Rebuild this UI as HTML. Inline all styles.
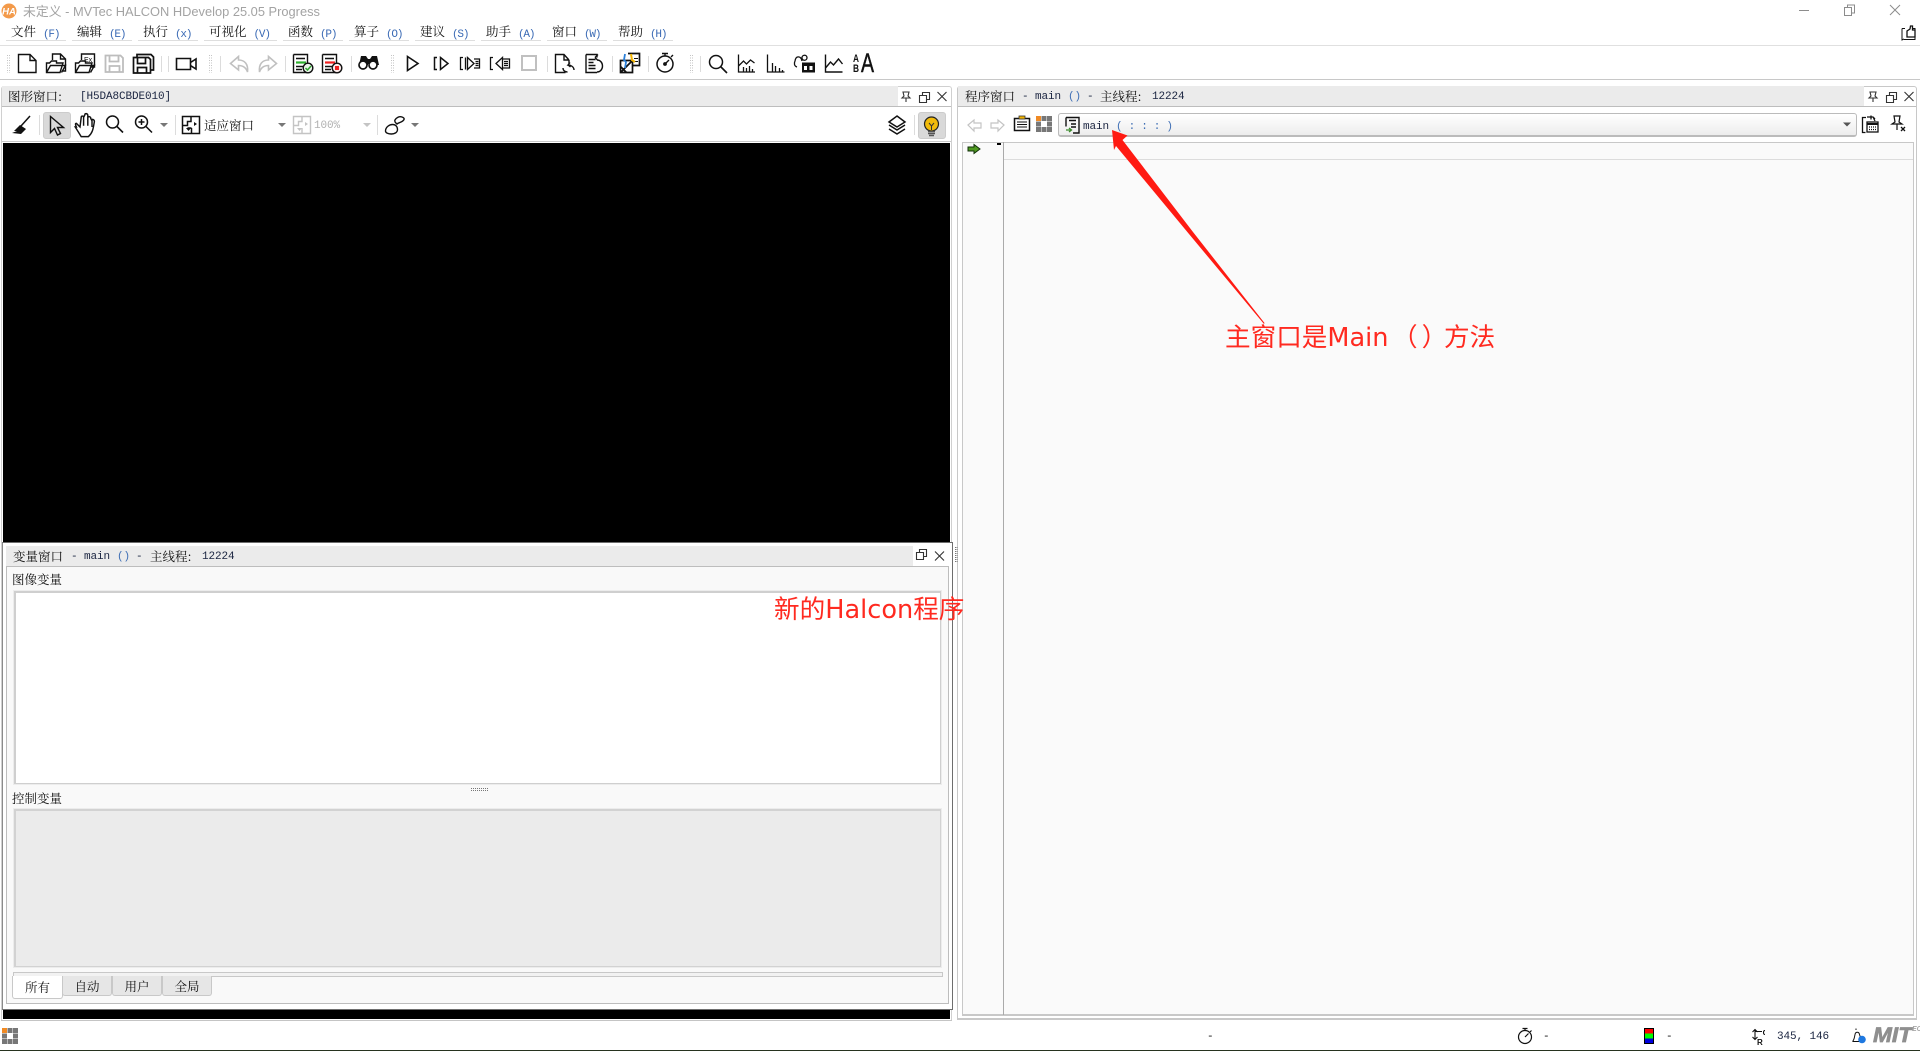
<!DOCTYPE html>
<html lang="zh"><head><meta charset="utf-8"><title>HALCON HDevelop</title>
<style>
html,body{margin:0;padding:0;background:#fff;width:1920px;height:1051px;overflow:hidden}
body{position:relative;font:12.5px/14px "Noto Serif CJK SC","Liberation Serif",serif;color:#111}
.a{position:absolute}
.t{position:absolute;white-space:pre;line-height:14px;font-size:12.5px}
.m{font-family:"Liberation Mono",monospace;font-size:11px;letter-spacing:-.1px;color:#1a2440}
.b{color:#3f6fb5}
.menu{position:absolute;top:24px;height:16px;border-bottom:1px solid #dedede;white-space:pre;line-height:15px;font-size:12.5px;padding-left:5px}
.menu .m{color:#3a6ab5;margin-left:7px;display:inline-block;letter-spacing:-1.2px;position:relative;top:1px}
.tab{position:absolute;top:976px;height:20px;box-sizing:border-box;border:1px solid #c8c8c8;border-top:0;background:#e6e6e6;border-radius:0 0 3px 3px;text-align:center;line-height:20px;font-size:12.5px}
.red{position:absolute;color:#ff2a20;font:25.6px/30px "Noto Sans CJK SC","DejaVu Sans",sans-serif;white-space:pre}
.red span{font-family:"DejaVu Sans",sans-serif}
svg{position:absolute;left:0;top:0}
</style></head><body>
<!-- title bar -->
<div class="t" style="left:23px;top:4px;color:#a3a3a3;font:12.85px/16px 'Liberation Sans','Noto Sans CJK SC',sans-serif">未定义 - MVTec HALCON HDevelop 25.05 Progress</div>
<!-- menu -->
<div class="menu" style="left:6px;width:55px">文件<span class="m">(F)</span></div>
<div class="menu" style="left:72px;width:55px">编辑<span class="m">(E)</span></div>
<div class="menu" style="left:138px;width:55px">执行<span class="m">(x)</span></div>
<div class="menu" style="left:204px;width:68px">可视化<span class="m">(V)</span></div>
<div class="menu" style="left:283px;width:55px">函数<span class="m">(P)</span></div>
<div class="menu" style="left:349px;width:55px">算子<span class="m">(O)</span></div>
<div class="menu" style="left:415px;width:55px">建议<span class="m">(S)</span></div>
<div class="menu" style="left:481px;width:55px">助手<span class="m">(A)</span></div>
<div class="menu" style="left:547px;width:55px">窗口<span class="m">(W)</span></div>
<div class="menu" style="left:613px;width:55px">帮助<span class="m">(H)</span></div>
<div class="a" style="left:0;top:45px;width:1920px;height:1px;background:#e0e0e0"></div>
<div class="a" style="left:0;top:79px;width:1920px;height:1px;background:#c8c8c8"></div>

<!-- left graphics panel -->
<div class="a" style="left:1px;top:86px;width:951px;height:934px;border:1px solid #d0d0d0;border-bottom:0;border-radius:3px 3px 0 0;box-sizing:border-box"></div>
<div class="a" style="left:2px;top:86px;width:896px;height:20px;background:#ebebeb"></div>
<div class="a" style="left:2px;top:106px;width:949px;height:1px;background:#bdbdbd"></div>
<div class="a" style="left:2px;top:141px;width:949px;height:1px;background:#c8c8c8"></div>
<div class="t" style="left:8px;top:89px">图形窗口:</div>
<div class="t m" style="left:80px;top:90px">[H5DA8CBDE010]</div>
<div class="a" style="left:3px;top:143px;width:947px;height:399px;background:#000"></div>
<div class="a" style="left:3px;top:1010px;width:947px;height:9px;background:#000"></div>
<div class="a" style="left:1px;top:1020px;width:951px;height:1px;background:#c4c4c4"></div>
<div class="a" style="left:43px;top:112px;width:28px;height:27px;background:#d9d9d9;border:1px solid #ccc;box-sizing:border-box;border-radius:3px"></div>
<div class="a" style="left:918px;top:112px;width:28px;height:27px;background:#d9d9d9;border:1px solid #ccc;box-sizing:border-box;border-radius:3px"></div>
<div class="t" style="left:204px;top:118px">适应窗口</div>
<div class="t" style="left:314px;top:119px;color:#b0b0b0;font-family:'Liberation Mono',monospace;font-size:11px;letter-spacing:-.1px">100%</div>

<!-- variables panel -->
<div class="a" style="left:2px;top:542px;width:951px;height:468px;background:#fff;border:1px solid #6e6e6e;border-left-color:#8a8a8a;box-sizing:border-box"></div>
<div class="a" style="left:6px;top:546px;width:907px;height:20px;background:#ebebeb"></div>
<div class="a" style="left:6px;top:566px;width:943px;height:438px;background:#f9f9f9;border:1px solid #bdbdbd;box-sizing:border-box"></div>
<div class="t" style="left:13px;top:549px">变量窗口</div>
<div class="t m" style="left:71px;top:550px">-</div>
<div class="t m" style="left:84px;top:550px">main</div>
<div class="t m b" style="left:117px;top:550px">()</div>
<div class="t m" style="left:136px;top:550px">-</div>
<div class="t" style="left:150px;top:549px">主线程:</div>
<div class="t m" style="left:202px;top:550px">12224</div>
<div class="t" style="left:12px;top:572px;font-size:12.5px">图像变量</div>
<div class="a" style="left:14px;top:591px;width:927px;height:193px;background:#fff;border:2px solid #cfcfcf;border-right-width:1px;border-bottom-width:1px;outline:1px solid #ececec;box-sizing:border-box"></div>
<div class="t" style="left:12px;top:791px;font-size:12.5px">控制变量</div>
<div class="a" style="left:14px;top:809px;width:927px;height:158px;background:#ebebeb;border:2px solid #d2d2d2;border-right-width:1px;border-bottom-width:1px;outline:1px solid #ececec;box-sizing:border-box"></div>
<div class="a" style="left:13px;top:972px;width:930px;height:5px;background:#f2f2f2;border:1px solid #c8c8c8;box-sizing:border-box"></div>
<div class="tab" style="left:62px;width:50px">自动</div>
<div class="tab" style="left:112px;width:50px">用户</div>
<div class="tab" style="left:162px;width:50px">全局</div>
<div class="tab" style="left:12px;top:976px;width:51px;height:23px;background:#fff;line-height:23px">所有</div>

<!-- program panel -->
<div class="a" style="left:957px;top:86px;width:960px;height:934px;border:1px solid #c8c8c8;border-width:1px 1px 2px 1px;border-radius:3px 3px 0 0;box-sizing:border-box"></div>
<div class="a" style="left:958px;top:86px;width:906px;height:20px;background:#ebebeb"></div>
<div class="a" style="left:958px;top:106px;width:958px;height:1px;background:#bdbdbd"></div>
<div class="t" style="left:965px;top:89px">程序窗口</div>
<div class="t m" style="left:1022px;top:90px">-</div>
<div class="t m" style="left:1035px;top:90px">main</div>
<div class="t m b" style="left:1068px;top:90px">()</div>
<div class="t m" style="left:1087px;top:90px">-</div>
<div class="t" style="left:1100px;top:89px">主线程:</div>
<div class="t m" style="left:1152px;top:90px">12224</div>
<div class="a" style="left:1058px;top:113px;width:799px;height:24px;border:1px solid #bbb;border-bottom-width:2px;border-radius:3px;background:linear-gradient(#fff,#ededed);box-sizing:border-box"></div>
<div class="t m" style="left:1083px;top:120px">main</div>
<div class="t m b" style="left:1116px;top:120px;letter-spacing:-.3px">( : : : )</div>
<div class="a" style="left:962px;top:142px;width:952px;height:874px;background:#fafafa;border:1px solid #c8c8c8;border-width:1px 1px 2px 1px;box-sizing:border-box"></div>
<div class="a" style="left:1003px;top:142px;width:1px;height:873px;background:#aaa"></div>
<div class="a" style="left:1004px;top:159px;width:909px;height:1px;background:#dcdcdc"></div>
<div class="a" style="left:997px;top:143px;width:4px;height:2px;background:#000"></div>

<!-- status -->
<div class="a" style="left:0;top:1050px;width:1920px;height:1px;background:#27331f"></div>
<div class="t m" style="left:1207px;top:1030px;color:#111">-</div>
<div class="t m" style="left:1543px;top:1030px;color:#111">-</div>
<div class="t m" style="left:1666px;top:1030px;color:#111">-</div>
<div class="t m" style="left:1777px;top:1030px">345, 146</div>
<div class="a" style="left:1873px;top:1025px;font:italic 700 21px/21px 'Liberation Sans',sans-serif;color:#8f8f8f;-webkit-text-stroke:.7px #8f8f8f;white-space:pre;transform-origin:0 0;transform:scaleX(1.08)">MIT</div>
<div class="a" style="left:1912px;top:1026px;font:italic 700 7px/8px 'Liberation Sans',sans-serif;color:#a8a8a8">EC</div>

<!-- annotations -->
<div class="red" style="left:774px;top:593px">新的<span>Halcon</span>程序</div>
<div class="red" style="left:1225px;top:321px">主窗口是<span>Main</span></div>
<div class="red" style="left:1392px;top:321px"><span style="font-family:'Noto Sans CJK SC',sans-serif;letter-spacing:4px">（</span><span style="font-family:'Noto Sans CJK SC',sans-serif">）</span></div>
<div class="red" style="left:1444px;top:321px">方法</div>

<svg width="1920" height="1051" viewBox="0 0 1920 1051" fill="none" stroke="#111" stroke-width="1.4">
<!-- app icon -->
<circle cx="9" cy="11" r="7.500" fill="#f39a4a" stroke="none"/>
<text x="9" y="14.500" font-family="Liberation Sans" font-size="9.500" font-weight="700" font-style="italic" fill="#fff" stroke="none" text-anchor="middle">HA</text>
<!-- window buttons -->
<g stroke="#8c8c8c" stroke-width="1">
<path d="M1799 10.500h10"/><path d="M1844.500 7.500h7v8h-7zM1847.500 7.500v-2.500h7v8h-3"/><path d="M1890 5l10 10M1900 5l-10 10"/>
</g>
<!-- thumbs -->
<path d="M1902 28.500v11.500l2-1M1902 28.500h3M1904 39.500h11v-11h-3" stroke-width="1"/><path d="M1907 37v-6l3-2 .5-3h2v4h2.500v7z" stroke-width="1.300"/>
<!-- grippers -->
<g stroke="#c4c4c4" stroke-width="1" stroke-dasharray="1 1.500">
<path d="M7.500 55v18M9.500 55v18M209.500 55v18M211.500 55v18M391.500 55v18M393.500 55v18M690.500 55v18M692.500 55v18"/>
</g>
<!-- seps -->
<g stroke="#dcdcdc" stroke-width="1">
<path d="M161.500 56v16M168.500 56v16M285.500 56v16M220.500 56v16M351.500 56v16M547.500 56v16M612.500 56v16M648.500 56v16M700.500 56v16M39.500 115v20M175.500 115v20M377.500 115v20M914.500 115v20"/>
</g>
<!-- new -->
<path d="M18.500 54.500h11.500l6 6v12h-17.500zM30 54.500v6h6"/>
<!-- open -->
<path d="M52.500 60v-6h8l5 5v12h-3M60.500 54v5h5M46.500 72.500v-9.500h3l2-2h5v2h6.500l-3 9.500zM46.500 72.500l4-7h15l-4 7"/>
<!-- open Ex -->
<path d="M81.500 60v-6h13v13h-4M75.500 72.500v-9.500h3l2-2h5v2h6.500l-3 9.500zM75.500 72.500l4-7h15l-4 7"/>
<text x="84" y="62" font-family="Liberation Sans" font-size="7" fill="#111" stroke="none">Ex</text>
<!-- save gray -->
<path d="M105.500 55.500h15l2.500 2.500v14h-17.500zM109.500 55.500v6h9v-6M109.500 72v-6h10v6" stroke="#bdbdbd" stroke-width="1.800"/>
<!-- save all -->
<path d="M133.500 57.500h15l2 2v13.500h-17zM137.500 57.500v6h8v-6M137.500 73v-5.500h9v5.500M137 57v-2.500h14l2.500 2.500v13h-3" stroke-width="1.700"/>
<!-- camera -->
<path d="M176.500 58.500h14v11h-14zM190.500 62.500l5.500-3.500v10l-5.500-3.500z" stroke-width="1.600"/>
<!-- undo/redo -->
<g stroke="#c0c0c0" stroke-width="1.600">
<path d="M238.500 56.500l-8 7 8 6.500v-4.500c4 0 7.500 2 9 6.500 1-8-3-12-9-12z"/>
<path d="M268.500 56.500l8 7-8 6.500v-4.500c-4 0-7.500 2-9 6.500-1-8 3-12 9-12z"/>
</g>
<!-- list green -->
<path d="M293.500 54.500h14v11M307.500 72.500h-14v-18M296 58.500h9M296 66.500h7M296 69.500h6"/>
<path d="M296 62.500h10" stroke="#2fb02f" stroke-width="2.200"/>
<circle cx="308" cy="68" r="4.800" fill="#eaf5ea"/><path d="M305.500 68l2 2 3.500-4" stroke="#2fa52f" stroke-width="1.500"/>
<!-- list red -->
<path d="M322.500 54.500h14v11M336.500 72.500h-14v-18M325 58.500h9M325 66.500h7M325 69.500h6"/>
<path d="M325 62.500h10" stroke="#ee2020" stroke-width="2.200"/>
<circle cx="337" cy="68" r="4.800" fill="#fdeaea"/><rect x="335" y="66" width="4" height="4" fill="#ee2020" stroke="none"/>
<!-- binoculars -->
<path d="M361 56h5l2 3h2l2-3h5l2 9h-9v-1h-2v1h-9z" fill="#111" stroke="none"/>
<circle cx="363" cy="65" r="4" fill="#fff" stroke-width="1.700"/><circle cx="373" cy="65" r="4" fill="#fff" stroke-width="1.700"/>
<!-- play -->
<path d="M407.500 56.500l10.500 7-10.500 7z" stroke-width="1.600"/>
<path d="M437 57.500h-2.500v12h2.500M440.500 57.500l7.500 6-7.500 6z" stroke-width="1.500"/>
<path d="M463 57.500h-2.500v12h2.500M465.500 57.500v12M467.500 57.500l6.500 6-6.500 6zM474 59h5.500v9h-5.500M475.500 61.500h3M475.500 63.500h3M475.500 65.500h3" stroke-width="1.300"/>
<path d="M493 57.500h-2.500v12h2.500M502.500 57.500l-6.500 6 6.500 6zM502.500 59h7v9h-7M504 61.500h4M504 63.500h4M504 65.500h4" stroke-width="1.300"/>
<rect x="522" y="56" width="14" height="14" stroke="#c0c0c0" stroke-width="2"/>
<!-- docs -->
<path d="M569 60l-5-5.500h-8.500v18h10M564 54.500v5.500h5M569 60v4M574 70c0-3-3-5-6-5l2-2.500M568 65l2.500 2M563 68c0 2.500 2 4 4.500 4" stroke-width="1.400"/>
<path d="M586 54.500h11v3M586 54.500v18h11M588.500 59.500h7M588.500 62.500h5M588.500 65.500h7M588.500 68.500h7M597 60c3.500 0 5.500 3 5.500 6s-2 6-5.500 6M595 57.500l3-3M595 57.500l3 3" stroke-width="1.400"/>
<!-- color doc -->
<path d="M620.500 60.500h12v12h-12zM620.500 72.500l12-12M620.500 66.500l6 6" stroke-width="1.700"/>
<path d="M628 53.500h11.500v12h-7" stroke-width="1.700"/>
<path d="M634 58.500h4M634 61.500h4" stroke-width="1"/>
<path d="M625 54l-1 6 2 2-1 6" stroke="#2a7fd8" stroke-width="1.800"/><path d="M631 54l1 6 3 2" stroke="#f2b400" stroke-width="2"/>
<!-- stopwatch -->
<circle cx="665" cy="64" r="8" stroke-width="1.500"/><path d="M662 53.500h6M665 53.500v2.500M671 57l2-2M665 64l4-4" stroke-width="1.400"/><circle cx="665" cy="64" r="1.200" fill="#111"/>
<!-- search -->
<circle cx="716" cy="62" r="6.500" stroke-width="1.500"/><path d="M721 67l6 6" stroke-width="1.600"/>
<!-- charts -->
<path d="M738.500 54.500v17.500h16.500M738.500 66l5-5 3 3 4-4 4 3M743.500 72v-5M746.500 72v-4M749.500 72v-6M752.500 72v-3" stroke-width="1.300"/>
<path d="M767.500 54.500v17.500h17M772.500 72v-9M775.500 72v-6M779.500 72v-4M782.500 72v-2" stroke-width="1.300"/>
<path d="M802 61c-1-5-6-6-7 0-1 2-1 5 2 6M802 58a2.500 2.500 0 1 0 5-.5 2.500 2.500 0 0 0-5 .5" stroke-width="1.300"/><rect x="802" y="62.500" width="13" height="10" fill="#111" stroke="none"/><path d="M804 66h3v4h-3zM809.500 66h3v4h-3z" fill="#fff" stroke="none"/>
<path d="M825.500 54.500v17.500h17M825.500 68l5-6 3 3 5-6 4 5" stroke-width="1.400"/>
<text x="853" y="62" font-family="Liberation Sans" font-size="11" font-weight="700" fill="#111" stroke="none" textLength="6" lengthAdjust="spacingAndGlyphs">A</text>
<text x="853" y="72" font-family="Liberation Sans" font-size="11" font-weight="700" fill="#111" stroke="none" textLength="6" lengthAdjust="spacingAndGlyphs">B</text>
<text x="861" y="72" font-family="Liberation Sans" font-size="27" fill="#111" stroke="#111" stroke-width=".5" textLength="13" lengthAdjust="spacingAndGlyphs">A</text>

<!-- graphics toolbar -->
<path d="M30 116l-9 10" stroke-width="1.500"/><path d="M20 125l6 4-5 5-9-1 5-2-3 0z" fill="#111" stroke="none"/>
<path d="M50.500 116.500v16l4-4 3 6.500 3-1.500-3-6h6z" stroke-width="1.400"/>
<g transform="translate(86 127) scale(1.200) translate(-86 -126)"><path d="M78 126c-1-2-1-3 0-3l3 3 1-8c0-1.500 2-1.500 2 0l1-2c0-1.500 2-1.500 2.500 0v2c.5-1 2.500-1 2.500 1l.5 1c1-.8 2.500 0 2.500 1.500-1 5-1 9-5 12.500h-6c-2-3-3-5-5-8zM84 118v7M87.500 118v7M91 120v6" stroke-width="1.200"/></g>
<circle cx="112.500" cy="122" r="6" stroke-width="1.500"/><path d="M117 126.500l6 6" stroke-width="1.600"/>
<circle cx="141.500" cy="122" r="6" stroke-width="1.500"/><path d="M146 126.500l6 6M138.500 122h6M141.500 119v6" stroke-width="1.500"/>
<path d="M160 123h8l-4 4z" fill="#777" stroke="none"/>
<path d="M182.500 116.500h17v17h-17zM191 116.500v5h-3.500v4h-5M191.500 133v-5M187.500 128h4" stroke-width="1.500"/><path d="M194 122l3 2-3 2zM186 128l2.500 3 2.500-3z" fill="#111" stroke="none"/>
<path d="M278 123h8l-4 4z" fill="#777" stroke="none"/>
<g stroke="#c4c4c4" stroke-width="1.400"><path d="M293.500 116.500h17v17h-17zM302 116.500v5h-3.500v4h-5M302 133v-5"/></g><path d="M305 122l3 2-3 2zM297 128l2.500 3 2.500-3z" fill="#c4c4c4" stroke="none"/>
<path d="M363 123h8l-4 4z" fill="#c4c4c4" stroke="none"/>
<path d="M385.500 131c0-4 4-6.500 7-6.500s5 2 5 5c0 3-3 4.500-6 4.500s-6-1-6-3zM395 120c1-2 4-4 7-3 3 1 3 3-1 5-2 1-3 1-4 2-1-1-3-2-2-4z" stroke-width="1.400"/>
<path d="M411 123h8l-4 4z" fill="#777" stroke="none"/>
<path d="M897 116l8 6-8 5-8-5zM889 125l8 5 8-5M889 129l8 5 8-5" stroke-width="1.500"/>
<circle cx="931.500" cy="124" r="7" fill="#f2bb0a" stroke="#222" stroke-width="1.200"/>
<path d="M929 123l2.500 3 2.500-3M931.500 126v4" stroke-width="1" stroke="#333"/>
<path d="M928 131.500h7M928 133.500h7M929 135.500h5" stroke="#555" stroke-width="1.500"/>

<!-- panel buttons -->
<g stroke-width="1.100" stroke="#333">
<path d="M903 92h6l-1 4 2 2h-8l2-2zM906 98v4"/><path d="M919.500 95.500h7v7h-7zM922.500 95.500v-3h7v7h-3"/><path d="M937.500 92l9 9M946.500 92l-9 9"/>
<path d="M1870 92h6l-1 4 2 2h-8l2-2zM1873 98v4"/><path d="M1886.500 95.500h7v7h-7zM1889.500 95.500v-3h7v7h-3"/><path d="M1904.500 92l9 9M1913.500 92l-9 9"/>
<path d="M916.500 552.500h7v7h-7zM919.500 552.500v-3h7v7h-3"/><path d="M935 551.500l9 9M944 551.500l-9 9"/>
</g>
<!-- program toolbar -->
<g stroke="#c4c4c4" stroke-width="1.200">
<path d="M968 125l6-5v3h7v5h-7v3z"/><path d="M1004 125l-6-5v3h-7v5h7v3z"/>
</g>
<rect x="1014.500" y="118.500" width="15" height="12" stroke-width="1.500"/><path d="M1017 122h10M1017 124.500h10M1017 127h10" stroke-width="1"/><rect x="1019" y="116" width="6" height="3" fill="#f2b400" stroke="#333" stroke-width=".8"/>
<g stroke="none" fill="#777">
<rect x="1036" y="116" width="5" height="5" fill="#f08a24"/><rect x="1041.500" y="116" width="5" height="5"/><rect x="1047" y="116" width="5" height="5"/>
<rect x="1036" y="121.500" width="5" height="5"/><rect x="1041.500" y="121.500" width="5" height="5" fill="#fff"/><rect x="1047" y="121.500" width="5" height="5"/>
<rect x="1036" y="127" width="5" height="5"/><rect x="1041.500" y="127" width="5" height="5"/><rect x="1047" y="127" width="5" height="5"/>
</g>
<path d="M1066 117.500h13v15.500h-6M1066 117.500v9M1069 120.500h7M1071 124h5M1071 127h5" stroke-width="1.400"/>
<path d="M1066 130h5M1069 128l2.500 2-2.500 2" stroke="#3a8a2a" stroke-width="1.300"/>
<path d="M1843 122.500h8l-4 4z" fill="#555" stroke="none"/>
<path d="M1866 117.500h-3.500v15h3M1867 117h6l2 2M1871 115.500v4M1875 121l-1.500-3" stroke-width="1.300"/>
<rect x="1867" y="122" width="11" height="10" stroke-width="1.300" fill="#fff"/><path d="M1867 124h11" stroke-width="2"/><path d="M1869 127h7M1869 129.500h7" stroke-width="1.200" stroke-dasharray="1 1"/>
<path d="M1894 116h6l-1 6 3 2h-10l3-2zM1897 124v6" stroke-width="1.200"/><path d="M1901 127l4 4M1905 127l-4 4" stroke-width="1.300"/>
<!-- current marker -->
<path d="M968 147h6v-2.500l6 4.500-6 4.500v-2.500h-6z" fill="#4f9a20" stroke="#12300a" stroke-width="1"/>

<!-- splitter dots -->
<g stroke="#777" stroke-width="1" stroke-dasharray="1 1">
<path d="M955.500 547v16M957 547v16M471 788.500h18M471 790.500h18"/>
</g>

<!-- status icons -->
<g stroke="none" fill="#777">
<rect x="2" y="1028" width="5" height="5" fill="#f08a24"/><rect x="7.500" y="1028" width="5" height="5"/><rect x="13" y="1028" width="5" height="5"/>
<rect x="2" y="1033.500" width="5" height="5"/><rect x="7.500" y="1033.500" width="5" height="5" fill="#fff"/><rect x="13" y="1033.500" width="5" height="5"/>
<rect x="2" y="1039" width="5" height="5"/><rect x="7.500" y="1039" width="5" height="5"/><rect x="13" y="1039" width="5" height="5"/>
</g>
<circle cx="1525" cy="1037" r="6.500" stroke-width="1.200"/><path d="M1522.500 1028.500h5M1525 1028.500v2M1530 1032l1.500-1.500M1525 1037l3.500-3.500" stroke-width="1.200"/>
<g stroke="none"><rect x="1644" y="1028" width="10" height="16" fill="#000"/><rect x="1645" y="1029" width="8" height="4.500" fill="#f00"/><rect x="1645" y="1033.500" width="8" height="5" fill="#0f0"/><rect x="1645" y="1038.500" width="8" height="4.500" fill="#00d"/></g>
<path d="M1755 1029.500v10M1752.500 1032l2.500-2.500 2.500 2.500M1752.500 1037l2.500 2.500 2.500-2.500M1755 1031.500h7M1765 1030.500c-2 0-2 4 0 4" stroke-width="1.100"/>
<text x="1757" y="1045" font-family="Liberation Sans" font-size="8" font-weight="700" fill="#111" stroke="none">R</text>
<path d="M1852.500 1041.500c2-2 2-5 2.500-7 .5-3 4-3 4.500 0l1 3M1852.500 1041.500h8M1856 1028.500v1.500" stroke-width="1"/>
<circle cx="1862" cy="1039.500" r="3.800" fill="#1e78e0" stroke="none"/>

<!-- big arrow -->
<polygon points="1112,130 1127.500,135.500 1122.500,140 1193,232 1264.500,323 1264,324 1189,234 1116,146 1114,150" fill="#ff1a12" stroke="none"/>
</svg>
</body></html>
